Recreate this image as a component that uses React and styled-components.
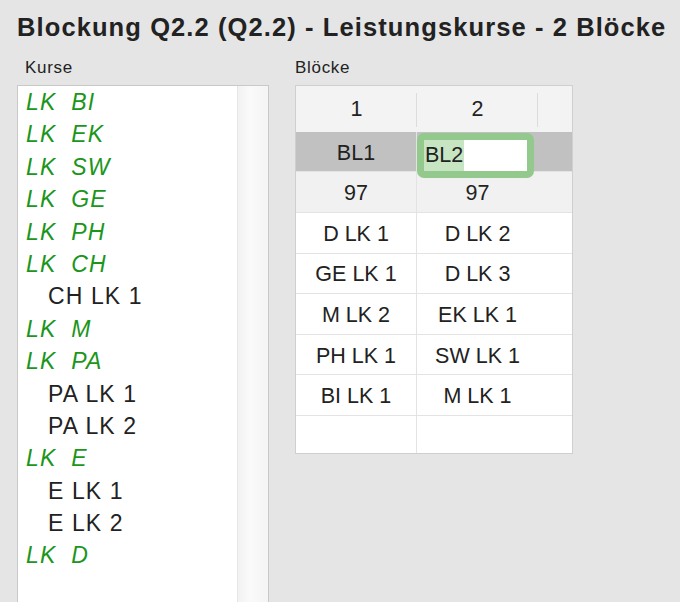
import React from 'react';
import styled, { createGlobalStyle } from 'styled-components';

const GlobalStyle = createGlobalStyle`
  html, body {
    margin: 0;
    padding: 0;
    background: #e5e5e5;
    font-family: "Liberation Sans", Arial, sans-serif;
    color: #222;
  }
`;

const Page = styled.div`
  height: 602px;
  overflow: hidden;
  padding: 12px 0 0 17px;
  box-sizing: border-box;
`;

const Title = styled.h1`
  margin: 0;
  font-size: 25.5px;
  line-height: 30px;
  font-weight: bold;
  letter-spacing: 1.1px;
  white-space: nowrap;
`;

const Columns = styled.div`
  display: flex;
  gap: 26px;
  margin-top: 15px;
`;

const Column = styled.div`
  display: flex;
  flex-direction: column;
  width: ${p => p.width}px;
`;

const Label = styled.div`
  font-size: 17px;
  line-height: 21px;
  letter-spacing: 0.7px;
  padding-left: ${p => p.indent || 0}px;
  margin-bottom: 7px;
`;

const ListBox = styled.div`
  display: flex;
  height: 560px;
  border: 1px solid #c9c9c9;
  background: #fff;
`;

const List = styled.ul`
  flex: 1;
  list-style: none;
  margin: 0;
  padding: 0;
`;

const Scrollbar = styled.div`
  width: 30px;
  border-left: 1px solid #e6e6e6;
  background: linear-gradient(to right, #f2f2f2, #fafafa 40%, #f4f4f4);
`;

const Item = styled.li`
  height: 32.4px;
  line-height: 33px;
  font-size: 23px;
  letter-spacing: 1.1px;
  white-space: pre;
  padding-left: ${p => (p.sub ? 30 : 8)}px;
  color: ${p => (p.sub ? '#222' : '#1b961b')};
  font-style: ${p => (p.sub ? 'normal' : 'italic')};
`;

const Table = styled.div`
  height: 367px;
  overflow: hidden;
  border: 1px solid #cfcfcf;
  background: #fff;
  display: grid;
  grid-template-columns: 121px 121px 1fr;
  grid-template-rows: 46px 40px 41px;
  grid-auto-rows: 40.6px;
`;

const Cell = styled.div`
  position: relative;
  display: flex;
  align-items: center;
  justify-content: center;
  padding-top: 3px;
  box-sizing: border-box;
  font-size: 21.5px;
  border-bottom: 1px solid #e3e3e3;
  border-right: ${p => (p.divider ? '1px solid #e3e3e3' : 'none')};
  background: ${p => p.bg || '#fff'};
`;

const HeadCell = styled.div`
  position: relative;
  display: flex;
  align-items: center;
  justify-content: center;
  padding-top: 1px;
  font-size: 21.5px;
  background: #f3f3f3;
  &::after {
    content: '';
    display: ${p => (p.last ? 'none' : 'block')};
    position: absolute;
    right: 0;
    top: 7px;
    bottom: 5px;
    width: 1px;
    background: #dcdcdc;
  }
`;

const Editor = styled.div`
  position: absolute;
  z-index: 2;
  left: 0;
  top: 1px;
  width: 117px;
  height: 45px;
  box-sizing: border-box;
  border: 7px solid #93c98d;
  border-radius: 7px;
  background: #fff;
  display: flex;
  align-items: stretch;
  font-size: 21.5px;
`;

const Selected = styled.span`
  background: #c7e5c2;
  padding: 0 1px;
  display: flex;
  align-items: center;
`;

const kurse = [
  { t: 'LK  BI' },
  { t: 'LK  EK' },
  { t: 'LK  SW' },
  { t: 'LK  GE' },
  { t: 'LK  PH' },
  { t: 'LK  CH' },
  { t: 'CH LK 1', sub: true },
  { t: 'LK  M' },
  { t: 'LK  PA' },
  { t: 'PA LK 1', sub: true },
  { t: 'PA LK 2', sub: true },
  { t: 'LK  E' },
  { t: 'E LK 1', sub: true },
  { t: 'E LK 2', sub: true },
  { t: 'LK  D' },
];

const rows = [
  ['D LK 1', 'D LK 2'],
  ['GE LK 1', 'D LK 3'],
  ['M LK 2', 'EK LK 1'],
  ['PH LK 1', 'SW LK 1'],
  ['BI LK 1', 'M LK 1'],
  ['', ''],
];

export default function App() {
  return (
    <Page>
      <GlobalStyle />
      <Title>Blockung Q2.2 (Q2.2) - Leistungskurse - 2 Blöcke</Title>
      <Columns>
        <Column width={252}>
          <Label indent={8}>Kurse</Label>
          <ListBox>
            <List>
              {kurse.map((k, i) => (
                <Item key={`kurs-${i}`} sub={k.sub}>{k.t}</Item>
              ))}
            </List>
            <Scrollbar />
          </ListBox>
        </Column>
        <Column width={278}>
          <Label>Blöcke</Label>
          <Table>
            <HeadCell>1</HeadCell>
            <HeadCell>2</HeadCell>
            <HeadCell last />
            <Cell bg="#c1c1c1" divider>BL1</Cell>
            <Cell bg="#c1c1c1">
              <Editor><Selected>BL2</Selected></Editor>
            </Cell>
            <Cell bg="#c1c1c1" />
            <Cell bg="#f1f1f1" divider>97</Cell>
            <Cell bg="#f1f1f1">97</Cell>
            <Cell bg="#f1f1f1" />
            {rows.map((r, i) => (
              <React.Fragment key={`row-${i}`}>
                <Cell divider>{r[0]}</Cell>
                <Cell>{r[1]}</Cell>
                <Cell />
              </React.Fragment>
            ))}
          </Table>
        </Column>
      </Columns>
    </Page>
  );
}
